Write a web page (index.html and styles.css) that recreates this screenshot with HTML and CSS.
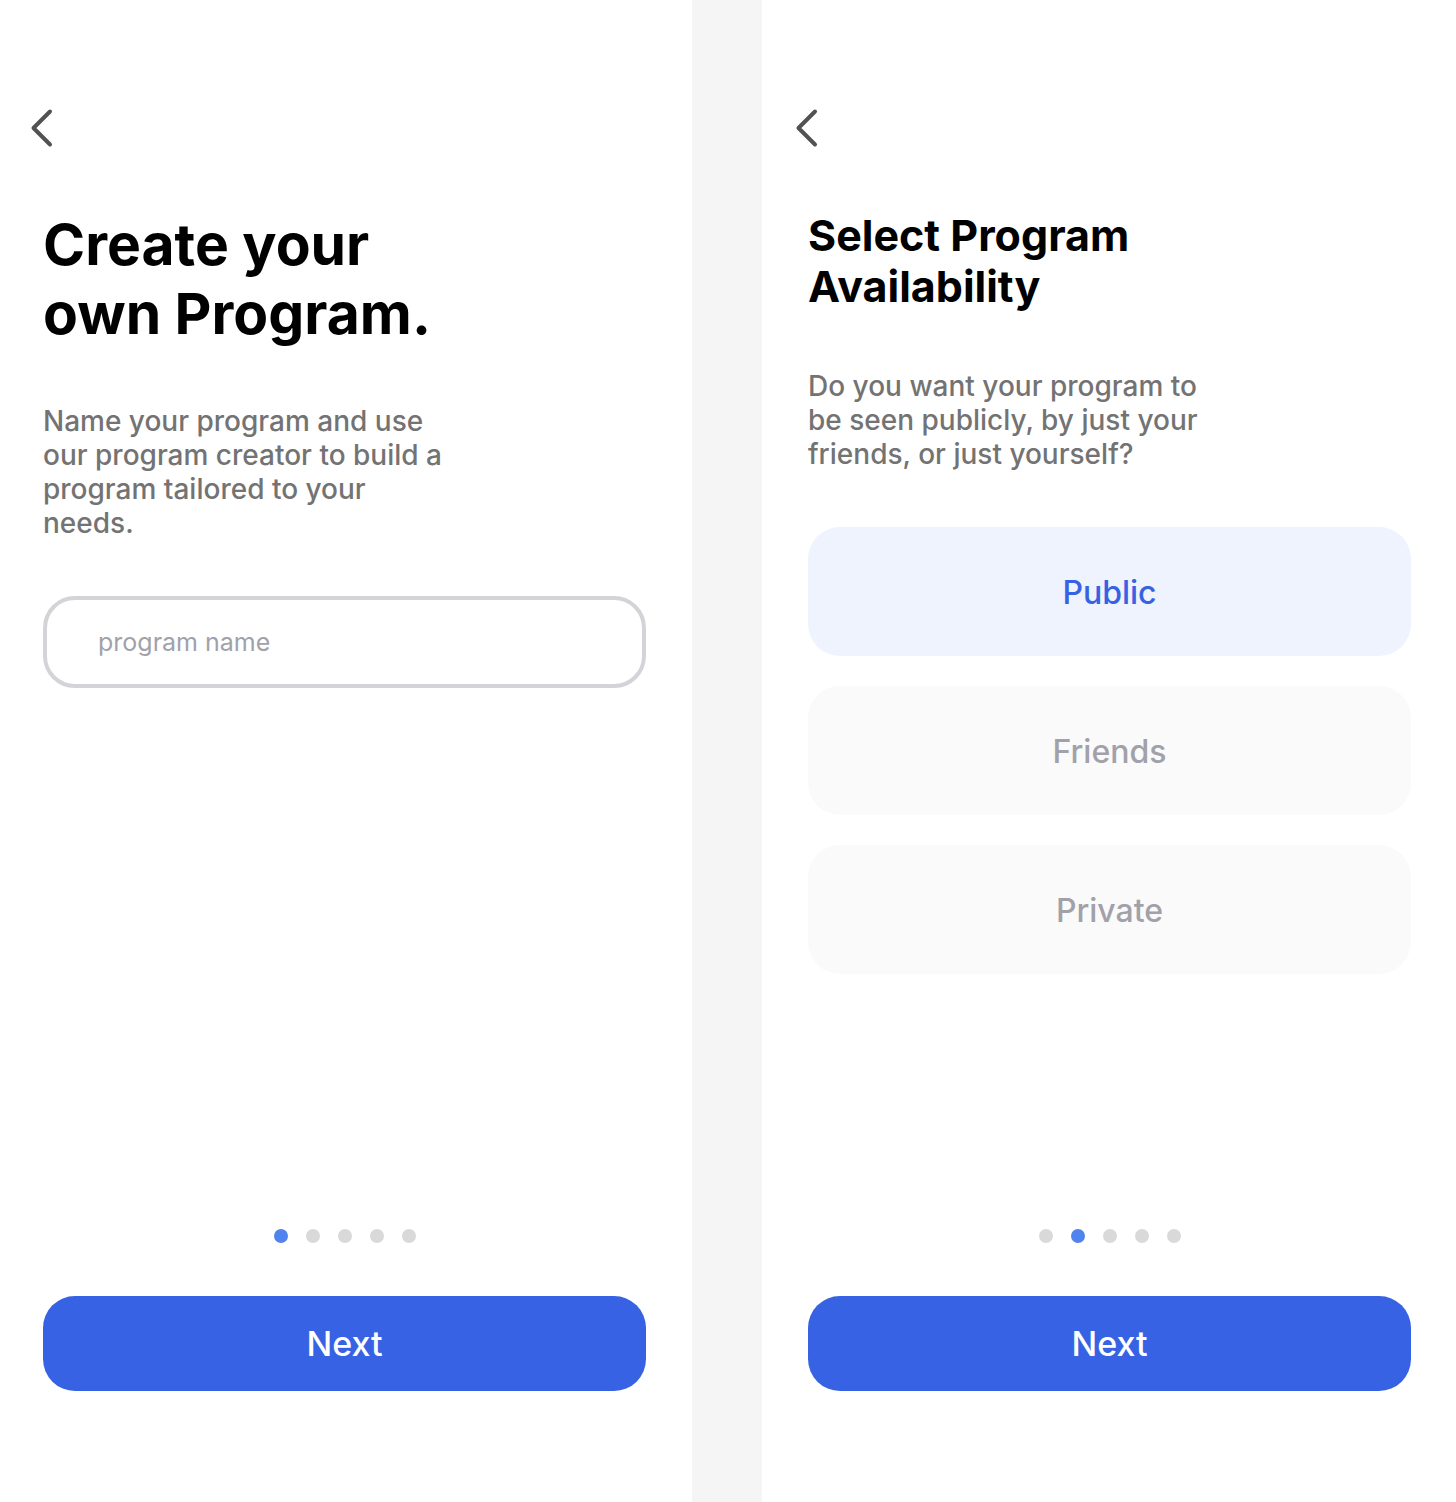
FILE: index.html
```html
<!DOCTYPE html>
<html lang="en">
<head>
  <meta charset="utf-8">
  <meta name="viewport" content="width=device-width, initial-scale=1">
  <title>Create your own Program</title>
  <link rel="stylesheet" href="styles.css">
</head>
<body>
  <main class="screens">
    <form class="screen screen--name">
      <button class="back" type="button" aria-label="Back">
        <svg class="back__icon" viewBox="0 0 24 40" aria-hidden="true"><path d="M20 3.500 3.500 20 20 36.500"/></svg>
      </button>
      <h1 class="title title--large">Create your<br>own Program.</h1>
      <p class="lead"><label for="program-name">Name your program and use our program creator to build a program tailored to your needs.</label></p>
      <input class="field" id="program-name" type="text" placeholder="program name">
      <ol class="steps" aria-label="Step 1 of 5">
        <li class="step step--current"></li>
        <li class="step"></li>
        <li class="step"></li>
        <li class="step"></li>
        <li class="step"></li>
      </ol>
      <button class="next" type="button">Next</button>
    </form>

    <form class="screen screen--availability">
      <button class="back" type="button" aria-label="Back">
        <svg class="back__icon" viewBox="0 0 24 40" aria-hidden="true"><path d="M20 3.500 3.500 20 20 36.500"/></svg>
      </button>
      <h1 class="title">Select Program<br>Availability</h1>
      <p class="lead" id="availability-lead">Do you want your program to be seen publicly, by just your friends, or just yourself?</p>
      <div class="options" role="radiogroup" aria-labelledby="availability-lead">
        <label class="option"><input class="option__input" type="radio" name="availability" checked>Public</label>
        <label class="option"><input class="option__input" type="radio" name="availability">Friends</label>
        <label class="option"><input class="option__input" type="radio" name="availability">Private</label>
      </div>
      <ol class="steps" aria-label="Step 2 of 5">
        <li class="step"></li>
        <li class="step step--current"></li>
        <li class="step"></li>
        <li class="step"></li>
        <li class="step"></li>
      </ol>
      <button class="next" type="button">Next</button>
    </form>
  </main>
</body>
</html>
```
FILE: styles.css
```css
* {
  box-sizing: border-box;
}

body {
  margin: 0;
  background: #f5f5f5;
  color: #000;
  font-family: Inter, "Liberation Sans", sans-serif;
  font-optical-sizing: none;
}

button,
input {
  font: inherit;
}

.screens {
  display: grid;
  grid-template-columns: 692fr 694fr;
  column-gap: 70px;
  min-height: 100vh;
}

.screen {
  display: flex;
  flex-direction: column;
  padding: 108px 46px 111px;
  background: #fff;
}

.screen--name {
  padding-left: 43px;
}

.screen--availability {
  padding-right: 45px;
}

.back {
  align-self: flex-start;
  margin: 0 0 62px -13px;
  padding: 0;
  border: 0;
  background: none;
  cursor: pointer;
}

.back__icon {
  display: block;
  width: 24px;
  height: 40px;
  fill: none;
  stroke: #525252;
  stroke-width: 4;
  stroke-linecap: round;
  stroke-linejoin: round;
}

.title {
  margin: 0 0 57px;
  font-size: 43px;
  font-weight: 700;
  line-height: 51px;
}

.title--large {
  margin-bottom: 56px;
  font-size: 57px;
  line-height: 69px;
}

.lead {
  max-width: 410px;
  margin: 0 0 56px;
  color: #737373;
  font-size: 28px;
  font-weight: 500;
  line-height: 34px;
}

.field {
  width: 100%;
  height: 92px;
  padding: 0 51px;
  border: 4px solid #d4d4d8;
  border-radius: 32px;
  background: #fff;
  font-size: 25px;
}

.field::placeholder {
  color: #a1a1aa;
  opacity: 1;
}

.options {
  display: grid;
  gap: 30px;
}

.option {
  display: flex;
  align-items: center;
  justify-content: center;
  height: 129px;
  padding-top: 2px;
  border-radius: 32px;
  background: #fafafa;
  color: #a1a1aa;
  font-size: 32px;
  font-weight: 500;
  cursor: pointer;
}

.option:has(:checked) {
  background: #eef3fe;
  color: #3762e3;
}

.option__input {
  appearance: none;
  width: 0;
  height: 0;
  margin: 0;
}

.option:has(:focus-visible),
.next:focus-visible {
  outline: 3px solid #93b4f8;
}

.steps {
  display: flex;
  justify-content: center;
  gap: 18px;
  margin: auto 0 53px;
  padding: 0;
  list-style: none;
}

.step {
  width: 14px;
  height: 14px;
  border-radius: 50%;
  background: #d9d9d9;
}

.step--current {
  background: #4f83ee;
}

.next {
  height: 95px;
  border: 0;
  border-radius: 32px;
  background: #3762e3;
  color: #fff;
  font-size: 34px;
  font-weight: 500;
  cursor: pointer;
}
```
